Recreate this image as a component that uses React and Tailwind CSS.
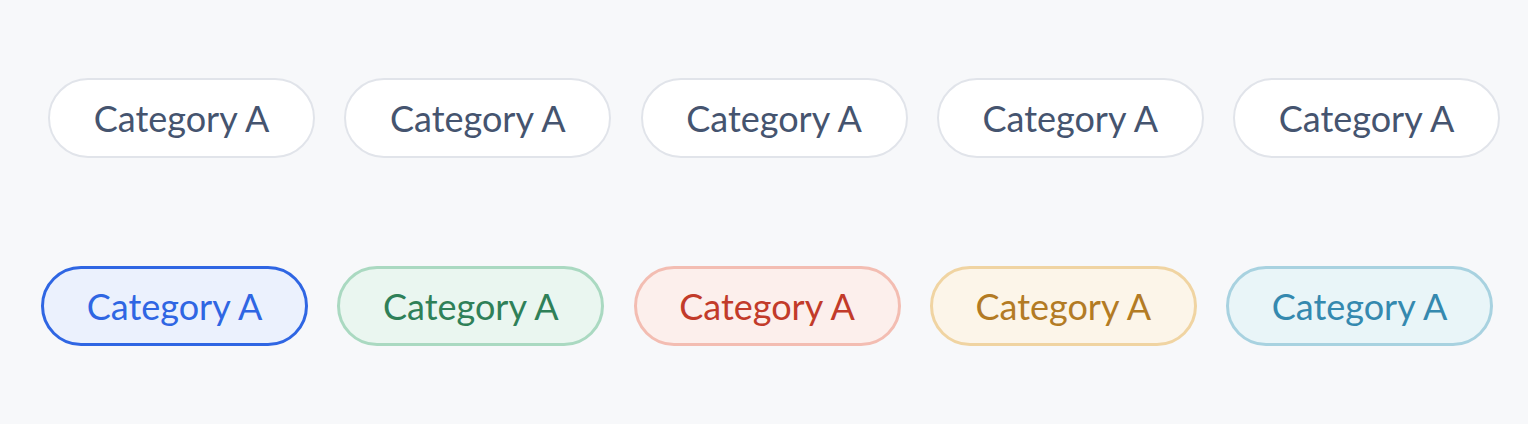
const font = { fontFamily: 'Lato, "Noto Sans", sans-serif' };

const tones = [
  'border-[3px] border-[#2f66e3] bg-[#ebf1fd] text-[#2f66e3]',
  'border-[3px] border-[#aad9c1] bg-[#eaf6f0] text-[#2f8058]',
  'border-[3px] border-[#f3bdb2] bg-[#fcefec] text-[#c23b2a]',
  'border-[3px] border-[#f0d4a2] bg-[#fcf5e9] text-[#b37b24]',
  'border-[3px] border-[#a8d2e0] bg-[#e9f5f8] text-[#3589af]'
];

const Pill = ({ className }) => (
  <div className={`w-[267px] h-[80px] rounded-full flex items-center justify-center text-[36px] leading-none ${className}`}>
    Category A
  </div>
);

export default function App() {
  return (
    <div className="w-[1528px] h-[424px] bg-[#f7f8fa] pt-[78px]" style={font}>
      {/* Plain chips */}
      <div className="flex gap-[29.25px] pl-[48px]">
        {[0, 1, 2, 3, 4].map((i) => (
          <Pill key={i} className="border-2 border-[#e1e4ea] bg-white text-[#45546f]" />
        ))}
      </div>

      {/* Tinted chips */}
      <div className="flex gap-[29.25px] pl-[41px] mt-[108px]">
        {tones.map((t, i) => (
          <Pill key={i} className={t} />
        ))}
      </div>
    </div>
  );
}
